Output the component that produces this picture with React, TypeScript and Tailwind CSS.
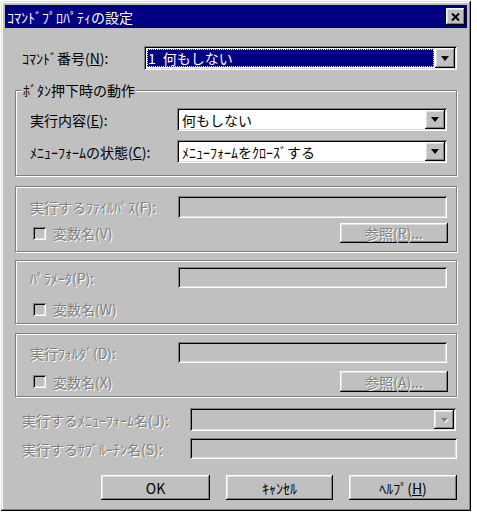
import React from "react";

const sunken =
  "shadow-[inset_1px_1px_#808080,inset_-1px_-1px_#ffffff,inset_2px_2px_#000000,inset_-2px_-2px_#dfdfdf]";
const raised =
  "shadow-[inset_-1px_-1px_#000000,inset_1px_1px_#ffffff,inset_-2px_-2px_#808080,inset_2px_2px_#dfdfdf]";
const dis = "text-[#808080] [text-shadow:1px_1px_0_#ffffff]";
const groupBox =
  "relative mx-[10px] border border-[#808080] shadow-[inset_1px_1px_#ffffff,1px_1px_#ffffff]";

function Tri({ disabled }: { disabled?: boolean }) {
  if (disabled) {
    return (
      <svg width="9" height="6" viewBox="0 0 9 6">
        <polygon points="2,2 9,2 5.5,6" fill="#ffffff" />
        <polygon points="1,1 8,1 4.5,5" fill="#808080" />
      </svg>
    );
  }
  return (
    <svg width="8" height="5" viewBox="0 0 8 5">
      <polygon points="0,0 8,0 4,5" fill="#000000" />
    </svg>
  );
}

function Combo({
  value,
  selected,
  disabled,
}: {
  value?: React.ReactNode;
  selected?: boolean;
  disabled?: boolean;
}) {
  return (
    <div
      className={`flex h-full flex-1 p-[2px] ${sunken} ${
        disabled ? "bg-[#c0c0c0]" : "bg-white"
      }`}
    >
      <div className="flex flex-1 items-center">
        {selected ? (
          <div className="m-[1px] flex h-[calc(100%-2px)] flex-1 items-center bg-[#000080] pl-[1px] text-white outline-1 outline-dotted outline-[#ffff66] -outline-offset-1">
            {value}
          </div>
        ) : (
          <div className="pl-[3px]">{value}</div>
        )}
      </div>
      <div
        className={`flex h-full w-[20px] items-center justify-center bg-[#c0c0c0] ${raised}`}
      >
        <Tri disabled={disabled} />
      </div>
    </div>
  );
}

function Field({ disabled }: { disabled?: boolean }) {
  return (
    <div
      className={`h-full flex-1 ${sunken} ${
        disabled ? "bg-[#c0c0c0]" : "bg-white"
      }`}
    />
  );
}

function Check({ label }: { label: string }) {
  return (
    <div className="flex items-center">
      <div className={`h-[13px] w-[13px] bg-[#c0c0c0] ${sunken}`} />
      <span className={`ml-[7px] ${dis}`}>{label}</span>
    </div>
  );
}

function Btn({
  label,
  disabled,
  w,
}: {
  label: React.ReactNode;
  disabled?: boolean;
  w: string;
}) {
  return (
    <div
      className={`flex h-full items-center justify-center bg-[#c0c0c0] ${raised} ${w} ${
        disabled ? dis : ""
      }`}
    >
      {label}
    </div>
  );
}

export default function App() {
  return (
    <div className="h-[516px] w-[477px] bg-white p-[1px] font-['Noto_Sans_CJK_JP',sans-serif] text-[14px] leading-none text-black">
      <div className="flex h-[510px] w-[470px] flex-col bg-[#c0c0c0] p-[4px] shadow-[inset_-1px_-1px_#000000,inset_1px_1px_#dfdfdf,inset_-2px_-2px_#808080,inset_2px_2px_#ffffff]">
        {/* Title bar */}
        <div className="flex h-[23px] items-center justify-between bg-[#000080] pl-[2px] pr-[2px] text-white">
          <span>ｺﾏﾝﾄﾞﾌﾟﾛﾊﾟﾃｨの設定</span>
          <div
            className={`flex h-[17px] w-[19px] items-center justify-center bg-[#c0c0c0] ${raised}`}
          >
            <svg width="9" height="8" viewBox="0 0 9 8">
              <path d="M1 0.5L8 7.5M8 0.5L1 7.5" stroke="#000" strokeWidth="2" />
            </svg>
          </div>
        </div>

        {/* Command number */}
        <div className="mt-[18px] flex h-[24px] items-center pl-[17px] pr-[10px]">
          <span className="w-[122px]">
            ｺﾏﾝﾄﾞ番号(<span className="underline">N</span>):
          </span>
          <Combo
            value={
              <span className="flex items-center">
                <span>1</span>
                <span className="ml-[7px]">何もしない</span>
              </span>
            }
            selected
          />
        </div>

        {/* Group 1 */}
        <div className={`${groupBox} mt-[20px] h-[86px] pt-[17px]`}>
          <span className="absolute -top-[8px] left-[6px] bg-[#c0c0c0] px-[1px]">
            ﾎﾞﾀﾝ押下時の動作
          </span>
          <div className="flex h-[23px] items-center pl-[14px] pr-[9px]">
            <span className="w-[147px]">
              実行内容(<span className="underline">E</span>):
            </span>
            <Combo value="何もしない" />
          </div>
          <div className="mt-[9px] flex h-[23px] items-center pl-[14px] pr-[9px]">
            <span className="w-[147px]">
              ﾒﾆｭｰﾌｫｰﾑの状態(<span className="underline">C</span>):
            </span>
            <Combo value="ﾒﾆｭｰﾌｫｰﾑをｸﾛｰｽﾞする" />
          </div>
        </div>

        {/* Group 2 */}
        <div className={`${groupBox} mt-[10px] h-[66px] pt-[9px]`}>
          <div className="flex h-[22px] items-center pl-[14px] pr-[9px]">
            <span className={`w-[148px] ${dis}`}>実行するﾌｧｲﾙﾊﾟｽ(F):</span>
            <Field disabled />
          </div>
          <div className="mt-[5px] flex h-[20px] items-center justify-between pl-[17px] pr-[8px]">
            <Check label="変数名(V)" />
            <Btn label="参照(R)..." disabled w="w-[108px]" />
          </div>
        </div>

        {/* Group 3 */}
        <div className={`${groupBox} mt-[8px] h-[64px] pt-[6px]`}>
          <div className="flex h-[21px] items-center pl-[14px] pr-[9px]">
            <span className={`w-[148px] ${dis}`}>ﾊﾟﾗﾒｰﾀ(P):</span>
            <Field disabled />
          </div>
          <div className="mt-[11px] flex h-[20px] items-center pl-[17px]">
            <Check label="変数名(W)" />
          </div>
        </div>

        {/* Group 4 */}
        <div className={`${groupBox} mt-[9px] h-[64px] pt-[8px]`}>
          <div className="flex h-[21px] items-center pl-[14px] pr-[9px]">
            <span className={`w-[148px] ${dis}`}>実行ﾌｫﾙﾀﾞ(D):</span>
            <Field disabled />
          </div>
          <div className="mt-[8px] flex h-[21px] items-center justify-between pl-[17px] pr-[8px]">
            <Check label="変数名(X)" />
            <Btn label="参照(A)..." disabled w="w-[108px]" />
          </div>
        </div>

        {/* Menu form name */}
        <div className="mt-[11px] flex h-[23px] items-center pl-[17px] pr-[11px]">
          <span className={`w-[168px] ${dis}`}>実行するﾒﾆｭｰﾌｫｰﾑ名(J):</span>
          <Combo disabled />
        </div>
        <div className="mt-[7px] flex h-[21px] items-center pl-[17px] pr-[10px]">
          <span className={`w-[168px] ${dis}`}>実行するｻﾌﾞﾙｰﾁﾝ名(S):</span>
          <Field disabled />
        </div>

        {/* Buttons */}
        <div className="mt-[16px] flex h-[25px] justify-end gap-[16px] pr-[10px]">
          <Btn label="OK" w="w-[109px]" />
          <Btn label="ｷｬﾝｾﾙ" w="w-[107px]" />
          <Btn
            label={
              <span>
                ﾍﾙﾌﾟ(<span className="underline">H</span>)
              </span>
            }
            w="w-[108px]"
          />
        </div>
      </div>
    </div>
  );
}
